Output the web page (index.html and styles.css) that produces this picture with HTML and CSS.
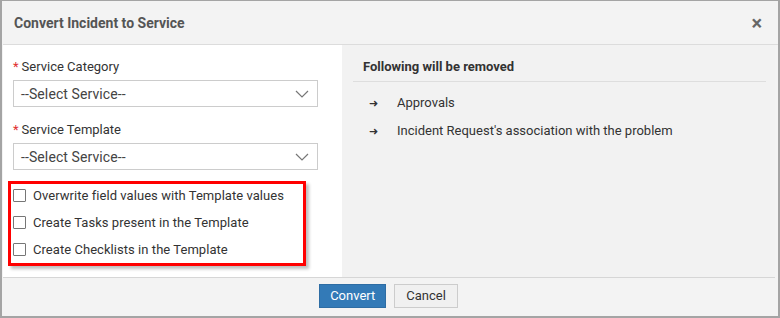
FILE: index.html
```html
<!DOCTYPE html>
<html lang="en">
<head>
    <meta charset="UTF-8">
    <title>Convert Incident to Service</title>
    <link rel="stylesheet" href="styles.css">
</head>
<body>
    <div class="modal">
        <!-- Cabecera -->
        <div class="modal-header">
            <h3>Convert Incident to Service</h3>
            <span class="close">&times;</span>
        </div>

        <div class="modal-body">
            <!-- Formulario -->
            <div class="left-pane">
                <label class="field-label"><span class="req">*</span>Service Category</label>
                <div class="select">
                    <span>--Select Service--</span>
                    <svg width="14" height="8" viewBox="0 0 14 8"><path d="M1 1l6 6 6-6" fill="none" stroke="#777" stroke-width="1.2"/></svg>
                </div>

                <label class="field-label"><span class="req">*</span>Service Template</label>
                <div class="select">
                    <span>--Select Service--</span>
                    <svg width="14" height="8" viewBox="0 0 14 8"><path d="M1 1l6 6 6-6" fill="none" stroke="#777" stroke-width="1.2"/></svg>
                </div>

                <div class="highlight">
                    <label class="check"><span class="box"></span>Overwrite field values with Template values</label>
                    <label class="check"><span class="box"></span>Create Tasks present in the Template</label>
                    <label class="check"><span class="box"></span>Create Checklists in the Template</label>
                </div>
            </div>

            <!-- Lista de elementos eliminados -->
            <div class="right-pane">
                <h4>Following will be removed</h4>
                <ul class="removed">
                    <li><span class="arrow">&#10140;</span>Approvals</li>
                    <li><span class="arrow">&#10140;</span>Incident Request's association with the problem</li>
                </ul>
            </div>
        </div>

        <div class="modal-footer">
            <button class="btn btn-primary">Convert</button>
            <button class="btn">Cancel</button>
        </div>
    </div>
</body>
</html>
```

FILE: styles.css
```css
body {
    margin: 0;
    font-family: Roboto, "Liberation Sans", sans-serif;
    font-size: 13px;
    color: #333;
}
.modal {
    width: 780px;
    height: 318px;
    box-sizing: border-box;
    border: 2px solid #a4a4a4;
    border-top-width: 1px;
    display: flex;
    flex-direction: column;
    background: #f3f3f3;
}
.modal-header {
    height: 44px;
    box-sizing: border-box;
    border-bottom: 1px solid #dcdcdc;
    display: flex;
    align-items: center;
    justify-content: space-between;
    padding: 1px 16px 0 11px;
    margin-left: 1px;
}
.modal-header h3 {
    margin: 0;
    font-size: 14px;
    font-weight: bold;
    color: #555;
}
.close {
    font-size: 20px;
    font-weight: bold;
    color: #666;
    line-height: 1;
}
.modal-body {
    height: 232px;
    display: flex;
    margin: 0 3px 0 1px;
    border-bottom: 1px solid #d6d6d6;
}
.left-pane {
    width: 339px;
    background: #fff;
    padding: 14px 0 0 10px;
    box-sizing: border-box;
}
.field-label {
    display: block;
    font-size: 13px;
    line-height: 16px;
    margin-bottom: 5px;
}
.req {
    color: #e03030;
    margin-right: 3px;
}
.select {
    width: 305px;
    height: 27px;
    box-sizing: border-box;
    border: 1px solid #ccc;
    display: flex;
    align-items: center;
    justify-content: space-between;
    padding: 0 8px 0 7px;
    margin-bottom: 15px;
}
.select span {
    font-size: 14px;
    color: #444;
    letter-spacing: 0.1px;
}
.highlight {
    width: 298px;
    height: 85px;
    box-sizing: border-box;
    border: 3px solid #ff0000;
    margin: -4px 0 0 -5px;
    padding: 0 0 0 2px;
    box-shadow: 3px 3px 3px rgba(0, 0, 0, 0.25);
}
.check {
    display: flex;
    align-items: center;
    height: 27px;
    font-size: 13px;
    letter-spacing: 0.05px;
}
.check:first-child {
    margin-top: -2px;
}
.box {
    width: 13px;
    height: 13px;
    box-sizing: border-box;
    border: 1px solid #767676;
    border-radius: 1px;
    background: #fff;
    margin-right: 7px;
}
.right-pane {
    flex: 1;
    background: #f2f2f2;
    padding: 0 9px 0 11px;
}
.right-pane h4 {
    margin: 0;
    height: 36px;
    line-height: 44px;
    font-size: 13px;
    font-weight: bold;
    padding-left: 10px;
    border-bottom: 1px solid #dedede;
}
.removed {
    list-style: none;
    margin: 0;
    padding: 11px 0 0 16px;
}
.removed li {
    height: 28px;
    line-height: 20px;
}
.arrow {
    font-size: 11px;
    display: inline-block;
    width: 28px;
    color: #333;
}
.modal-footer {
    flex: 1;
    display: flex;
    justify-content: center;
    align-items: center;
    gap: 8px;
    margin-left: 1px;
    padding: 0 4px 3px 0;
}
.btn {
    font-family: inherit;
    font-size: 13px;
    height: 24px;
    padding: 0 11px;
    border: 1px solid #ccc;
    background: #f0f0f0;
    color: #333;
}
.btn-primary {
    background: #337ab7;
    border-color: #2e6da4;
    color: #fff;
    padding: 0 10px;
}
```
